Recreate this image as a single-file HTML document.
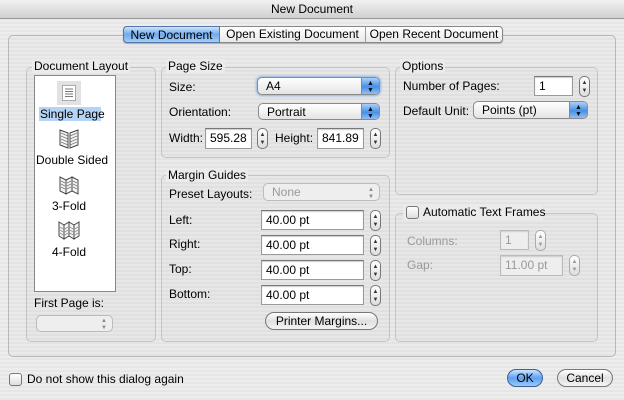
<!DOCTYPE html>
<html><head><meta charset="utf-8"><style>
*{margin:0;padding:0;box-sizing:border-box}
body{width:624px;height:400px;overflow:hidden;position:relative;font-family:"Liberation Sans",sans-serif;font-size:12px;color:#000;
background:repeating-linear-gradient(#ededed 0 2px,#e6e6e6 2px 4px)}
.a{position:absolute;white-space:nowrap}
.t{position:absolute;white-space:nowrap;line-height:14px}
.title{left:0;top:0;width:624px;height:19px;background:linear-gradient(#f2f2f2,#cfcfcf);border-bottom:1px solid #999;text-align:center;line-height:19px;font-size:12px}
.box{position:absolute;border:1px solid #c4c4c4;border-radius:5px;background:rgba(0,0,0,0.012)}
.gt{position:absolute;background:#ebebeb;padding:0 2px;line-height:14px}
.f{position:absolute;background:#fff;border:1px solid #9a9a9a;border-top-color:#777;box-shadow:inset 0 1px 1px #ccc;padding:0 4px;line-height:18px;overflow:hidden}
.st{position:absolute;width:11px;height:21px;border:1px solid #777;border-radius:5px;background:linear-gradient(#fff,#ddd);font-size:6px;line-height:8px;text-align:center;padding-top:2px;color:#333}
.pop{position:absolute;border:1px solid #8a8a8a;border-radius:5px;background:linear-gradient(#fff,#e4e4e4);padding-left:8px;line-height:16px;overflow:hidden}
.pop b{position:absolute;right:0;top:0;bottom:0;width:18px;background:linear-gradient(#a9d0f8,#4a8fe3 55%,#8ec0f5);border-left:1px solid #6a8cc0;font-size:7px;line-height:7px;text-align:center;padding-top:2px;color:#012;font-weight:normal}
.dis{color:#999;border-color:#bbb;background:#eee}
.btn{position:absolute;border:1px solid #777;border-radius:10px;background:linear-gradient(#fff,#e0e0e0 50%,#f4f4f4);text-align:center;line-height:16px}
.cb{position:absolute;width:13px;height:13px;border:1px solid #777;border-radius:3px;background:linear-gradient(#fff,#ddd)}
</style></head><body>
<div class="a title">New Document</div>

<!-- tab content box -->
<div class="box" style="left:8px;top:35px;width:608px;height:322px;border-color:#b8b8b8"></div>
<!-- tabs -->
<div class="a" style="left:123px;top:26px;width:380px;height:17px;border:1px solid #888;border-radius:4px;background:linear-gradient(#fff,#e8e8e8);box-shadow:0 1px 1px #aaa"></div>
<div class="a" style="left:123px;top:26px;width:97px;height:17px;border:1px solid #5577aa;border-radius:4px 0 0 4px;background:linear-gradient(#cde4fb,#6fa9ee 50%,#a4cdf7);text-align:center;line-height:16px">New Document</div>
<div class="a" style="left:220px;top:26px;width:146px;height:17px;border-right:1px solid #999;text-align:center;line-height:17px">Open Existing Document</div>
<div class="a" style="left:366px;top:26px;width:136px;height:17px;text-align:center;line-height:17px">Open Recent Document</div>

<!-- Document Layout -->
<div class="box" style="left:26px;top:67px;width:130px;height:275px"></div>
<div class="gt" style="left:32px;top:59px">Document Layout</div>
<div class="a" style="left:34px;top:75px;width:82px;height:217px;background:#fff;border:1px solid #888"></div>
<div class="a" style="left:57px;top:81px;width:24px;height:24px;background:#e2e2e2"></div>
<svg class="a" style="left:61px;top:84px" width="16" height="18"><rect x="1.5" y="1.5" width="13" height="15" fill="#fff" stroke="#666" stroke-dasharray="1 1"/><path d="M4 5h8M4 7.5h8M4 10h8M4 12.5h8" stroke="#777"/></svg>
<div class="a" style="left:39px;top:107px;width:62px;height:14px;background:#b5d3f5"></div>
<div class="t" style="left:40px;top:107px">Single Page</div>
<svg class="a" style="left:58px;top:128px" width="22" height="21"><path d="M2 2l8 3v15l-8-3zM20 2l-8 3v15l8-3z" fill="#f4f4f4" stroke="#444"/><path d="M3 5l7 3M3 8l7 3M3 11l7 3M3 14l7 3M19 5l-7 3M19 8l-7 3M19 11l-7 3M19 14l-7 3" stroke="#777" stroke-width=".7"/></svg>
<div class="t" style="left:36px;top:153px">Double Sided</div>
<svg class="a" style="left:58px;top:175px" width="22" height="20"><path d="M2 2l6 3v14l-6-3zM8 5l6-3v14l-6 3zM14 2l6 3v14l-6-3z" fill="#f4f4f4" stroke="#444"/><path d="M3 6l4 2M3 9l4 2M3 12l4 2M9 8l4-2M9 11l4-2M9 14l4-2M15 6l4 2M15 9l4 2M15 12l4 2" stroke="#777" stroke-width=".7"/></svg>
<div class="t" style="left:52px;top:199px">3-Fold</div>
<svg class="a" style="left:57px;top:220px" width="24" height="20"><path d="M2 2l5 3v14l-5-3zM7 5l5-3v14l-5 3zM12 2l5 3v14l-5-3zM17 5l5-3v14l-5 3z" fill="#f4f4f4" stroke="#444"/><path d="M3 7l3 2M3 10l3 2M3 13l3 2M8 9l3-2M8 12l3-2M8 15l3-2M13 7l3 2M13 10l3 2M13 13l3 2M18 9l3-2M18 12l3-2M18 15l3-2" stroke="#777" stroke-width=".7"/></svg>
<div class="t" style="left:52px;top:245px">4-Fold</div>
<div class="t" style="left:34px;top:296px">First Page is:</div>
<div class="pop dis" style="left:36px;top:315px;width:77px;height:17px"><span style="position:absolute;right:5px;top:0;font-size:6px;line-height:7px;color:#888;padding-top:2px">▲<br>▼</span></div>

<!-- Page Size -->
<div class="box" style="left:161px;top:67px;width:229px;height:91px"></div>
<div class="gt" style="left:166px;top:59px">Page Size</div>
<div class="t" style="left:169px;top:80px">Size:</div>
<div class="pop" style="left:257px;top:77px;width:123px;height:18px;box-shadow:0 0 2px 1px #8db4e8">A4<b>▲<br>▼</b></div>
<div class="t" style="left:169px;top:105px">Orientation:</div>
<div class="pop" style="left:258px;top:103px;width:122px;height:17px">Portrait<b>▲<br>▼</b></div>
<div class="t" style="left:169px;top:131px">Width:</div>
<div class="f" style="left:205px;top:128px;width:47px;height:21px">595.28 p</div>
<div class="st" style="left:257px;top:128px">▲<br>▼</div>
<div class="t" style="left:275px;top:131px">Height:</div>
<div class="f" style="left:317px;top:128px;width:47px;height:21px">841.89 p</div>
<div class="st" style="left:370px;top:128px">▲<br>▼</div>

<!-- Margin Guides -->
<div class="box" style="left:161px;top:175px;width:229px;height:167px"></div>
<div class="gt" style="left:166px;top:168px">Margin Guides</div>
<div class="t" style="left:169px;top:187px">Preset Layouts:</div>
<div class="pop dis" style="left:263px;top:183px;width:117px;height:18px;color:#999">None<span style="position:absolute;right:5px;top:0;font-size:6px;line-height:7px;color:#888;padding-top:3px">▲<br>▼</span></div>
<div class="t" style="left:169px;top:213px">Left:</div>
<div class="f" style="left:261px;top:210px;width:103px;height:20px">40.00 pt</div>
<div class="st" style="left:370px;top:210px">▲<br>▼</div>
<div class="t" style="left:169px;top:237px">Right:</div>
<div class="f" style="left:261px;top:235px;width:103px;height:20px">40.00 pt</div>
<div class="st" style="left:370px;top:235px">▲<br>▼</div>
<div class="t" style="left:169px;top:262px">Top:</div>
<div class="f" style="left:261px;top:260px;width:103px;height:20px">40.00 pt</div>
<div class="st" style="left:370px;top:260px">▲<br>▼</div>
<div class="t" style="left:169px;top:287px">Bottom:</div>
<div class="f" style="left:261px;top:285px;width:103px;height:20px">40.00 pt</div>
<div class="st" style="left:370px;top:285px">▲<br>▼</div>
<div class="btn" style="left:265px;top:312px;width:113px;height:18px">Printer Margins...</div>

<!-- Options -->
<div class="box" style="left:395px;top:67px;width:203px;height:128px"></div>
<div class="gt" style="left:400px;top:59px">Options</div>
<div class="t" style="left:403px;top:79px">Number of Pages:</div>
<div class="f" style="left:534px;top:76px;width:39px;height:20px">1</div>
<div class="st" style="left:579px;top:76px">▲<br>▼</div>
<div class="t" style="left:403px;top:104px">Default Unit:</div>
<div class="pop" style="left:473px;top:101px;width:115px;height:18px">Points (pt)<b>▲<br>▼</b></div>

<!-- Auto text frames -->
<div class="box" style="left:395px;top:213px;width:203px;height:129px"></div>
<div class="gt" style="left:403px;top:204px;width:140px;height:16px"></div>
<div class="cb" style="left:406px;top:206px"></div>
<div class="t" style="left:423px;top:205px">Automatic Text Frames</div>
<div class="t" style="left:407px;top:234px;color:#999">Columns:</div>
<div class="f dis" style="left:500px;top:230px;width:29px;height:20px;color:#999">1</div>
<div class="st" style="left:535px;top:230px;border-color:#aaa;color:#999">▲<br>▼</div>
<div class="t" style="left:407px;top:258px;color:#999">Gap:</div>
<div class="f dis" style="left:500px;top:255px;width:63px;height:21px;color:#999">11.00 pt</div>
<div class="st" style="left:569px;top:255px;border-color:#aaa;color:#999">▲<br>▼</div>

<!-- bottom -->
<div class="cb" style="left:9px;top:373px"></div>
<div class="t" style="left:27px;top:372px">Do not show this dialog again</div>
<div class="btn" style="left:507px;top:369px;width:36px;height:18px;border-color:#3a5f9a;background:linear-gradient(#cfe6fd,#5d9ff0 50%,#9ccaf7)">OK</div>
<div class="btn" style="left:557px;top:369px;width:56px;height:18px">Cancel</div>
</body></html>
